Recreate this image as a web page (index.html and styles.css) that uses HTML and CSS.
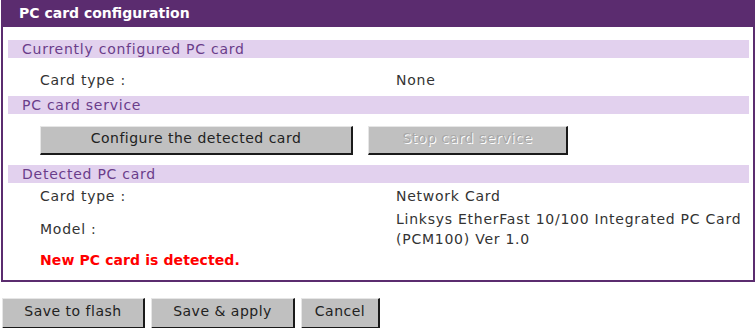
FILE: index.html
```html
<!DOCTYPE html>
<html>
<head>
<meta charset="utf-8">
<link rel="stylesheet" href="styles.css">
</head>
<body>
<div class="panel">
  <div class="panel-title">PC card configuration</div>
  <div class="panel-body">
    <div class="section-bar">Currently configured PC card</div>
    <div class="row row-current">
      <span class="label">Card type :</span>
      <span class="value">None</span>
    </div>
    <div class="section-bar">PC card service</div>
    <div class="row row-buttons">
      <button class="btn btn-configure">Configure the detected card</button>
      <button class="btn btn-stop" disabled>Stop card service</button>
    </div>
    <div class="section-bar">Detected PC card</div>
    <div class="row row-detected">
      <span class="label">Card type :</span>
      <span class="value">Network Card</span>
    </div>
    <div class="row row-model">
      <span class="label">Model :</span>
      <span class="value">Linksys EtherFast 10/100 Integrated PC Card<br>(PCM100) Ver 1.0</span>
    </div>
    <div class="alert">New PC card is detected.</div>
  </div>
</div>
<div class="actions">
  <button class="btn btn-flash">Save to flash</button>
  <button class="btn btn-apply">Save &amp; apply</button>
  <button class="btn btn-cancel">Cancel</button>
</div>
</body>
</html>
```
FILE: styles.css
```css
html, body {
  margin: 0;
  padding: 0;
  background: #ffffff;
}
body {
  font-family: "DejaVu Sans", Verdana, sans-serif;
  font-size: 14px;
  letter-spacing: 0.75px;
  color: #333333;
}
.panel {
  margin-left: 1px;
  width: 754px;
  box-sizing: border-box;
  border: 2px solid #5b2c6f;
  border-top: 0;
}
.panel-title {
  background: #5b2c6f;
  color: #ffffff;
  font-weight: bold;
  font-size: 14px;
  letter-spacing: 0;
  height: 27px;
  line-height: 27px;
  padding-left: 18px;
  margin: 0 -2px;
}
.panel-body {
  padding: 13px 4px 9px 5px;
}
.section-bar {
  background: #e2d1ee;
  color: #6a3d8a;
  height: 18px;
  line-height: 18px;
  padding-left: 14px;
}
.row {
  display: grid;
  grid-template-columns: 356px 1fr;
  padding-left: 32px;
  align-items: center;
}
.row-current {
  height: 38px;
  padding-top: 6px;
  box-sizing: border-box;
}
.row-buttons {
  display: flex;
  gap: 15px;
  padding-top: 12px;
  padding-bottom: 10px;
}
.row-detected {
  height: 26px;
}
.row-model {
  line-height: 20px;
}
.value {
  display: block;
}
.alert {
  color: #ff0000;
  font-weight: bold;
  letter-spacing: 0.1px;
  padding-left: 32px;
  height: 22px;
  line-height: 22px;
}
.btn {
  font-family: "DejaVu Sans", Verdana, sans-serif;
  font-size: 14px;
  letter-spacing: 0.5px;
  color: #222222;
  background: #c0c0c0;
  border-style: solid;
  border-width: 1px 2px 2px 1px;
  border-color: #e6e6e6 #1a1a1a #1a1a1a #e6e6e6;
  height: 29px;
  padding: 0 0 4px 0;
  margin: 0;
}
.btn-configure {
  width: 313px;
}
.btn-stop {
  width: 200px;
  color: #a8a8a8;
  text-shadow: 1px 1px 0 #ffffff;
}
.actions {
  display: flex;
  gap: 6px;
  padding: 16px 0 0 2px;
}
.btn-flash {
  width: 143px;
  height: 31px;
}
.btn-apply {
  width: 144px;
  height: 31px;
}
.btn-cancel {
  width: 79px;
  height: 31px;
}
```
